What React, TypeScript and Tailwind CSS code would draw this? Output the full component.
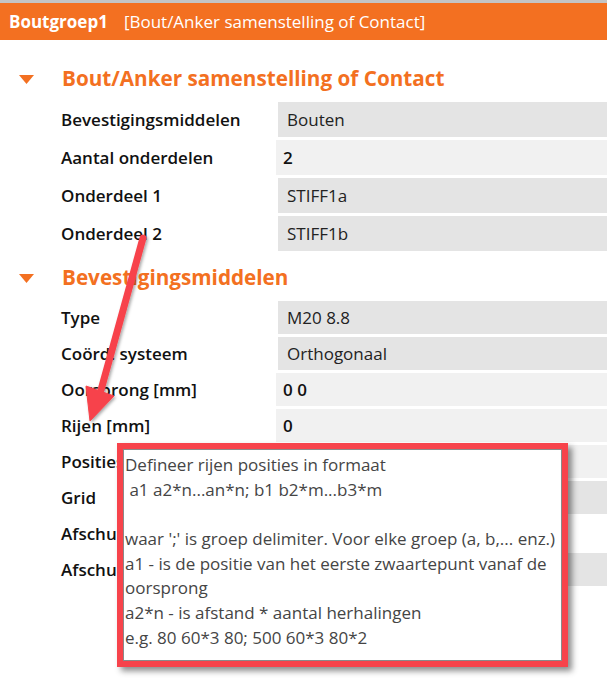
type Row = {
  label: string
  value?: string
  kind: 'combo' | 'text' | 'none'
}

const koppeling: Row[] = [
  { label: 'Bevestigingsmiddelen', value: 'Bouten', kind: 'combo' },
  { label: 'Aantal onderdelen', value: '2', kind: 'text' },
  { label: 'Onderdeel 1', value: 'STIFF1a', kind: 'combo' },
  { label: 'Onderdeel 2', value: 'STIFF1b', kind: 'combo' },
]

const middelen: Row[] = [
  { label: 'Type', value: 'M20 8.8', kind: 'combo' },
  { label: 'Coörd. systeem', value: 'Orthogonaal', kind: 'combo' },
  { label: 'Oorsprong [mm]', value: '0 0', kind: 'text' },
  { label: 'Rijen [mm]', value: '0', kind: 'text' },
  { label: 'Posities [mm]', kind: 'text' },
  { label: 'Grid', kind: 'combo' },
  { label: 'Afschuiving', kind: 'none' },
  { label: 'Afschuifvlak', kind: 'combo' },
]

const hint = [
  'Defineer rijen posities in formaat',
  ' a1 a2*n...an*n; b1 b2*m...b3*m',
  '',
  "waar ';' is groep delimiter. Voor elke groep (a, b,... enz.)",
  'a1 - is de positie van het eerste zwaartepunt vanaf de',
  'oorsprong',
  'a2*n - is afstand * aantal herhalingen',
  'e.g. 80 60*3 80; 500 60*3 80*2',
]

function Caret() {
  return (
    <svg width="15" height="9" viewBox="0 0 15 9" className="shrink-0">
      <polygon points="0,0 15,0 7.5,9" fill="#f37021" />
    </svg>
  )
}

function PropRow({ row, h }: { row: Row; h: string }) {
  return (
    <div className={`flex items-center ${h}`}>
      <div className="w-[215px] shrink-0 pl-[61px] box-content font-semibold text-[#111] whitespace-nowrap overflow-hidden">
        {row.label}
      </div>
      {row.kind === 'combo' && (
        <div className="flex-1 h-full ml-[2px] bg-[#e4e4e4] flex items-center pl-[9px] text-[#222]">
          {row.value}
        </div>
      )}
      {row.kind === 'text' && (
        <div className="flex-1 h-full bg-[#f1f1f1] flex items-center pl-[7px] font-semibold text-[#111]">
          {row.value}
        </div>
      )}
      {row.kind === 'none' && <div className="flex-1 h-full" />}
    </div>
  )
}

function Section({ title, rows, h, gap }: { title: string; rows: Row[]; h: string; gap: string }) {
  return (
    <div>
      <div className="flex items-center h-[36px]">
        <div className="w-[62px] pl-[19px] pt-[1px] flex">
          <Caret />
        </div>
        <span className="text-[20.7px] font-bold text-[#f37021]">{title}</span>
      </div>
      <div className={`flex flex-col ${gap} mt-[5px]`}>
        {rows.map((r) => (
          <PropRow key={r.label} row={r} h={h} />
        ))}
      </div>
    </div>
  )
}

export default function App() {
  return (
    <div className="relative w-[607px] h-[687px] bg-white overflow-hidden text-[17px] font-['Open_Sans','Noto_Sans',sans-serif]">
      <div className="h-[3px] bg-[#c4c4c4]" />
      <div className="h-[37px] bg-[#f37021] flex items-center pl-[9px] text-white">
        <span className="font-bold">Boutgroep1</span>
        <span className="ml-[16px]">[Bout/Anker samenstelling of Contact]</span>
      </div>

      <div className="mt-[21px]">
        <Section title="Bout/Anker samenstelling of Contact" rows={koppeling} h="h-[35px]" gap="gap-[3px]" />
      </div>
      <div className="mt-[9px]">
        <Section title="Bevestigingsmiddelen" rows={middelen} h="h-[33px]" gap="gap-[3px]" />
      </div>

      {/* tooltip with highlight frame */}
      <div className="absolute left-[117px] top-[443px] w-[451px] h-[224px] border-[6px] border-[#f7434b] shadow-[4px_4px_6px_rgba(0,0,0,0.45)]">
        <div className="h-full bg-white border border-[#8a8a8a] pt-[3px] pl-[1px] text-[#454545] leading-[24.7px]">
          {hint.map((line, i) => (
            <div key={i} className="whitespace-pre h-[24.7px]">
              {line}
            </div>
          ))}
        </div>
      </div>

      {/* pointer arrow */}
      <svg className="absolute left-0 top-0 pointer-events-none" width="607" height="687">
        <defs>
          <filter id="arrowShadow" x="-50%" y="-50%" width="200%" height="200%">
            <feDropShadow dx="1.5" dy="1.5" stdDeviation="1.5" floodColor="#000" floodOpacity="0.35" />
          </filter>
        </defs>
        <g filter="url(#arrowShadow)" fill="#f7434b" stroke="#f7434b">
          <line x1="143" y1="238" x2="101" y2="390" strokeWidth="7" strokeLinecap="round" />
          <polygon points="86,386 114,396 90,421" strokeWidth="1" strokeLinejoin="round" />
        </g>
      </svg>
    </div>
  )
}
